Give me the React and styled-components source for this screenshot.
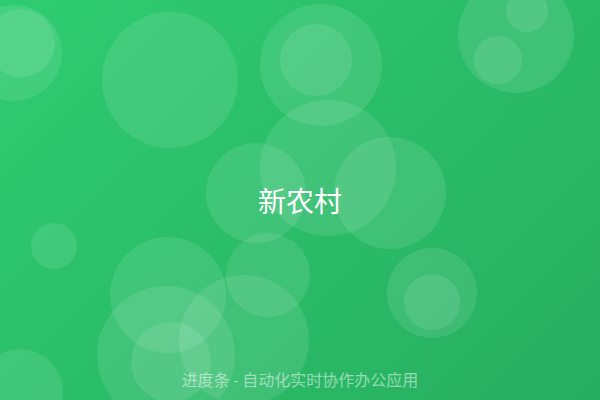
import React from "react";
import styled, { createGlobalStyle } from "styled-components";

const GlobalStyle = createGlobalStyle`
  html, body {
    margin: 0;
    padding: 0;
  }
  body {
    font-family: "Noto Sans", "Noto Sans CJK SC", sans-serif;
  }
`;

const Page = styled.div`
  position: relative;
  width: 600px;
  height: 400px;
  overflow: hidden;
  background: linear-gradient(135deg, #2ecc71 0%, #27ae60 100%);
  display: grid;
  grid-template-areas: "stack";
`;

const Bubble = styled.span`
  position: absolute;
  border-radius: 50%;
  background: rgba(255, 255, 255, 0.1);
  pointer-events: none;
`;

const Title = styled.h1`
  grid-area: stack;
  align-self: center;
  justify-self: center;
  position: relative;
  margin: 0;
  font-family: "Noto Sans CJK SC", sans-serif;
  font-size: 28px;
  font-weight: 400;
  line-height: 40px;
  color: #ffffff;
`;

const Footer = styled.p`
  grid-area: stack;
  align-self: end;
  justify-self: center;
  position: relative;
  margin: 0 0 9px;
  font-family: "Noto Sans CJK SC", sans-serif;
  font-size: 16px;
  line-height: 24px;
  color: rgba(255, 255, 255, 0.5);
`;

// [centerX, centerY, radius]
const bubbles = [
  [14, 53, 48],
  [21, 43, 34],
  [170, 80, 68],
  [321, 65, 61],
  [316, 60, 36],
  [516, 35, 58],
  [527, 11, 21],
  [498, 60, 24],
  [328, 168, 68],
  [256, 193, 50],
  [390, 193, 56],
  [54, 246, 23],
  [168, 295, 58],
  [268, 275, 42],
  [166, 355, 69],
  [244, 340, 65],
  [171, 362, 40],
  [20, 392, 43],
  [432, 293, 45],
  [432, 302, 28],
];

export default function App() {
  return (
    <>
      <GlobalStyle />
      <Page>
        {bubbles.map(([x, y, r], i) => (
          <Bubble
            key={i}
            style={{ left: x - r, top: y - r, width: r * 2, height: r * 2 }}
          />
        ))}
        <Title>新农村</Title>
        <Footer>进度条 - 自动化实时协作办公应用</Footer>
      </Page>
    </>
  );
}
